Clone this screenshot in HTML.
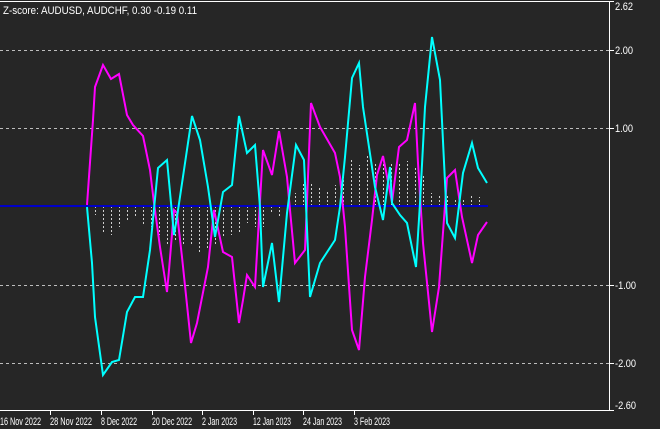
<!DOCTYPE html>
<html><head><style>
html,body{margin:0;padding:0;background:#262626;}
svg{display:block}
text{font-family:"Liberation Sans","DejaVu Sans",sans-serif;font-size:11px;fill:#fff}
</style></head><body>
<svg width="660" height="429" viewBox="0 0 660 429" xmlns="http://www.w3.org/2000/svg">
<rect width="660" height="429" fill="#262626"/>
<g stroke="#bdbdbd" stroke-width="1" stroke-dasharray="3,3" shape-rendering="crispEdges">
<line x1="0" y1="50.5" x2="609" y2="50.5"/>
<line x1="0" y1="128.5" x2="609" y2="128.5"/>
<line x1="0" y1="285.5" x2="609" y2="285.5"/>
<line x1="0" y1="363.5" x2="609" y2="363.5"/>
</g>
<g stroke="#cfcfcf" stroke-width="1" stroke-dasharray="2,2" shape-rendering="crispEdges">
<path d="M95.5 206V215M103.5 206V232M111.5 206V235M119.5 206V227M127.5 206V220M135.5 206V218M143.5 206V226M151.5 206V227M159.5 206V235M167.5 206V245M175.5 206V240M183.5 206V245M191.5 206V245M199.5 206V252M207.5 206V250M215.5 206V245M223.5 206V237M231.5 206V235M239.5 206V232M247.5 206V223M255.5 206V227M263.5 206V227M271.5 206V212M279.5 206V218M287.5 206V212"/>
<path d="M295.5 206V193M303.5 206V182M311.5 206V182M319.5 206V187M327.5 206V190M335.5 206V185M343.5 206V170M351.5 206V160M359.5 206V165M367.5 206V156M375.5 206V163M383.5 206V162M391.5 206V162M399.5 206V162M407.5 206V161M415.5 206V166M423.5 206V175M431.5 206V193M439.5 206V195M447.5 206V196M455.5 206V200M463.5 206V198M471.5 206V195M479.5 206V197"/>
</g>
<line x1="0" y1="206" x2="488" y2="206" stroke="#0000c8" stroke-width="2"/>
<polyline fill="none" stroke="#ff00ff" stroke-width="2" points="87,205 93,120 95,87 103,65 111,79 119,74 127,115 133,125 143,136 150,170 154,203 160,247 167,292 169,270 174,210 177,213 182,257 191,343 197,323 208,267 214,210 223,252 232,257 239,323 243,300 247,275 255,287 263,150 272,175 279,131 287,177 290,210 295,263 305,250 311,103 320,127 335,153 340,177 345,227 352,330 359,350 365,277 372,220 377,175 383,156 392,202 399,147 407,140 415,103 418,163 423,243 432,332 439,287 447,178 455,170 462,217 472,263 478,235 487,222"/>
<polyline fill="none" stroke="#00ffff" stroke-width="2" points="87,207 92,263 95,317 103,375 112,362 119,360 127,312 135,297 143,297 150,250 158,168 167,160 174,235 177,217 192,116 200,140 208,187 215,237 223,192 232,185 239,116 247,153 255,145 260,207 263,287 272,243 279,302 287,213 296,145 304,160 310,297 320,263 335,240 340,207 345,157 352,78 359,63 363,107 375,187 383,220 390,167 392,203 400,215 407,223 416,267 420,203 425,107 432,37 440,80 447,223 455,238 463,173 472,143 478,168 487,183"/>
<g stroke="#fff" stroke-width="1" fill="none" shape-rendering="crispEdges">
<polyline points="0,410.5 609.5,410.5 609.5,1.5 0,1.5"/>
<path d="M609 1.5H614M609 50.5H614M609 128.5H614M609 285.5H614M609 363.5H614M609 410.5H614"/>
<path d="M50.5 410V415M101.5 410V415M152.5 410V415M202.5 410V415M253.5 410V415M303.5 410V415M354.5 410V415"/>
</g>
<text x="3" y="14" textLength="194" lengthAdjust="spacingAndGlyphs">Z-score: AUDUSD, AUDCHF,  0.30 -0.19 0.11</text>
<text x="615" y="10" textLength="18" lengthAdjust="spacingAndGlyphs">2.62</text>
<text x="615" y="54" textLength="18" lengthAdjust="spacingAndGlyphs">2.00</text>
<text x="615" y="132" textLength="18" lengthAdjust="spacingAndGlyphs">1.00</text>
<text x="615" y="289" textLength="21" lengthAdjust="spacingAndGlyphs">-1.00</text>
<text x="615" y="367" textLength="21" lengthAdjust="spacingAndGlyphs">-2.00</text>
<text x="615" y="409" textLength="21" lengthAdjust="spacingAndGlyphs">-2.60</text>
<g>
<text x="0" y="425" textLength="41" lengthAdjust="spacingAndGlyphs">16 Nov 2022</text>
<text x="50" y="425" textLength="42" lengthAdjust="spacingAndGlyphs">28 Nov 2022</text>
<text x="101" y="425" textLength="36" lengthAdjust="spacingAndGlyphs">8 Dec 2022</text>
<text x="152" y="425" textLength="40" lengthAdjust="spacingAndGlyphs">20 Dec 2022</text>
<text x="202" y="425" textLength="35" lengthAdjust="spacingAndGlyphs">2 Jan 2023</text>
<text x="253" y="425" textLength="38" lengthAdjust="spacingAndGlyphs">12 Jan 2023</text>
<text x="303" y="425" textLength="39" lengthAdjust="spacingAndGlyphs">24 Jan 2023</text>
<text x="354" y="425" textLength="36" lengthAdjust="spacingAndGlyphs">3 Feb 2023</text>
</g>
</svg>
</body></html>
